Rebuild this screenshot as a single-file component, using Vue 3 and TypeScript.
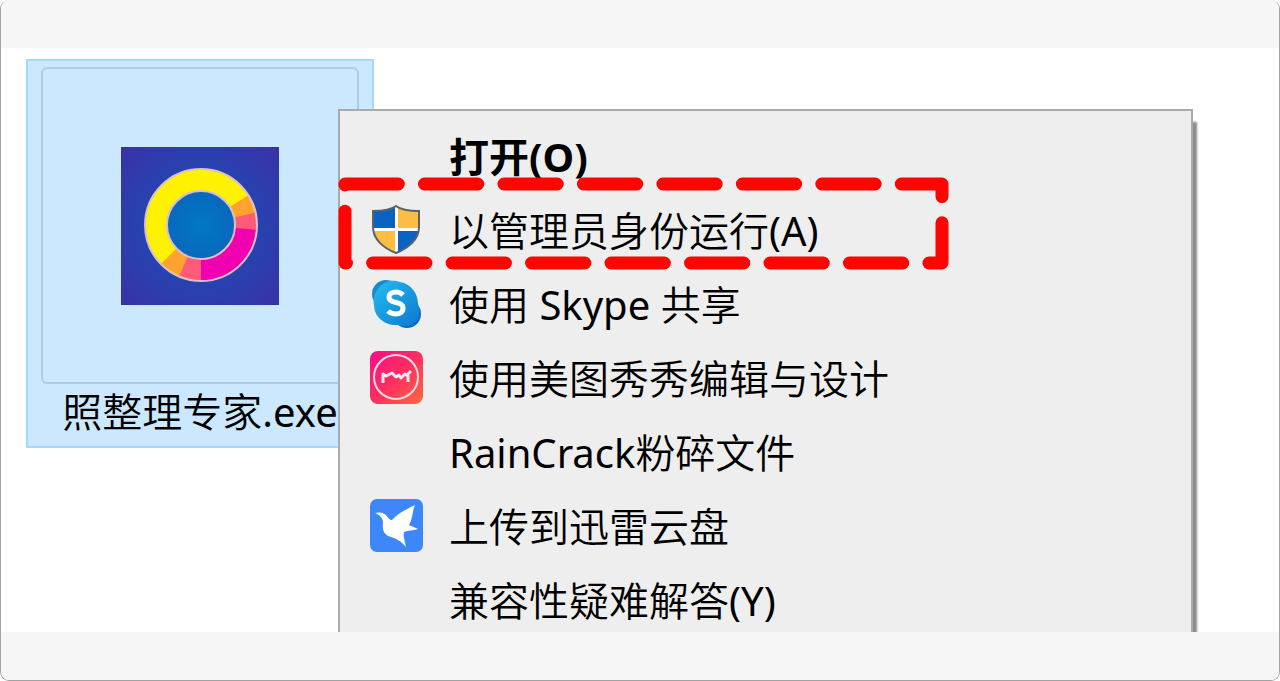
<script setup lang="ts">
type IconName = 'shield' | 'skype' | 'meitu' | 'bird'

interface MenuEntry {
  label: string
  icon?: IconName
  primary?: boolean
}

interface Run {
  text: string
  latin: boolean
}

const entries: MenuEntry[] = [
  { label: '打开(O)', primary: true },
  { label: '以管理员身份运行(A)', icon: 'shield' },
  { label: '使用 Skype 共享', icon: 'skype' },
  { label: '使用美图秀秀编辑与设计', icon: 'meitu' },
  { label: 'RainCrack粉碎文件' },
  { label: '上传到迅雷云盘', icon: 'bird' },
  { label: '兼容性疑难解答(Y)' },
]

const fileName = '照整理专家.exe'

// Latin runs are set a little heavier than the Chinese text around them.
function toRuns(text: string): Run[] {
  const parts = text.match(/[\x20-\x7e]+|[^\x20-\x7e]+/g) ?? []
  return parts.map((part) => ({ text: part, latin: /^[\x20-\x7e]/.test(part) }))
}

const ringSegments = [
  { color: '#ffa22e', from: -32, sweep: 20 },
  { color: '#ff5a78', from: -13, sweep: 19 },
  { color: '#f000b0', from: 5, sweep: 86 },
  { color: '#ff5a78', from: 90, sweep: 24 },
  { color: '#ffa22e', from: 113, sweep: 23 },
]
</script>

<template>
  <div class="page">
    <header class="band"></header>
    <main class="desktop">
      <button type="button" class="file">
        <span class="thumb">
          <svg class="app-icon" viewBox="0 0 158 158" aria-hidden="true">
            <defs>
              <radialGradient id="app-bg" cx="50%" cy="50%" r="70%">
                <stop offset="0" stop-color="#1c50b8" />
                <stop offset="0.6" stop-color="#2a40ae" />
                <stop offset="1" stop-color="#3a31a6" />
              </radialGradient>
              <radialGradient id="app-core">
                <stop offset="0" stop-color="#0078c4" />
                <stop offset="1" stop-color="#0a68bc" />
              </radialGradient>
            </defs>
            <rect width="158" height="158" fill="url(#app-bg)" />
            <circle cx="80" cy="78" r="34" fill="url(#app-core)" />
            <circle cx="80" cy="78" r="45" fill="none" stroke="#d9bcd6" stroke-width="24" />
            <circle cx="80" cy="78" r="45" fill="none" stroke="#fff200" stroke-width="20" />
            <circle
              v-for="s in ringSegments"
              :key="s.from"
              cx="80"
              cy="78"
              r="45"
              fill="none"
              :stroke="s.color"
              stroke-width="20"
              pathLength="360"
              :stroke-dasharray="`${s.sweep} ${360 - s.sweep}`"
              :transform="`rotate(${s.from} 80 78)`"
            />
          </svg>
        </span>
        <span class="file-name"><span v-for="(run, i) in toRuns(fileName)" :key="i" :class="{ latin: run.latin }">{{ run.text }}</span></span>
      </button>

      <div class="menu" role="menu">
        <button
          v-for="entry in entries"
          :key="entry.label"
          type="button"
          role="menuitem"
          class="item"
          :class="{ primary: entry.primary }"
        >
          <span class="icon">
            <svg v-if="entry.icon === 'shield'" viewBox="0 0 53 53" aria-hidden="true">
              <defs>
                <clipPath id="shield-clip">
                  <path d="M26 3C21 7 12 8 3 8V24C3 36 13 45 26 50C39 45 49 36 49 24V8C40 8 31 7 26 3Z" />
                </clipPath>
              </defs>
              <g clip-path="url(#shield-clip)">
                <rect width="53" height="53" fill="#fff" />
                <rect width="25" height="25" fill="#0a62c2" />
                <rect x="28" width="25" height="25" fill="#fdbd42" />
                <rect y="28" width="25" height="25" fill="#fdbd42" />
                <rect x="28" y="28" width="25" height="25" fill="#0a62c2" />
              </g>
              <path
                d="M26 3C21 7 12 8 3 8V24C3 36 13 45 26 50C39 45 49 36 49 24V8C40 8 31 7 26 3Z"
                fill="none"
                stroke="#58636c"
                stroke-width="2"
              />
            </svg>
            <svg v-else-if="entry.icon === 'skype'" viewBox="0 0 53 53" aria-hidden="true">
              <defs>
                <linearGradient id="skype-main" x1="0" y1="0" x2="1" y2="1">
                  <stop offset="0" stop-color="#24bdf0" />
                  <stop offset="1" stop-color="#0a78d0" />
                </linearGradient>
              </defs>
              <circle cx="16" cy="17" r="14" fill="#168ccb" />
              <circle cx="37" cy="37" r="14" fill="#0a6cc4" />
              <path
                d="M17 5C21 3 26 4 30 5C41 7 48 16 48 27C50 32 51 38 47 43C42 49 34 50 28 48C15 49 4 40 4 28C2 20 7 9 17 5Z"
                fill="url(#skype-main)"
              />
              <path
                d="M33 18C31 16 29 15 26 15C22 15 19 17 19 20C19 28 33 23 33 31C33 35 30 37 26 37C22 37 20 36 18 34"
                fill="none"
                stroke="#fff"
                stroke-width="5"
              />
            </svg>
            <svg v-else-if="entry.icon === 'meitu'" viewBox="0 0 53 53" aria-hidden="true">
              <defs>
                <linearGradient id="meitu-bg" x1="0" y1="0" x2="1" y2="1">
                  <stop offset="0" stop-color="#f80c88" />
                  <stop offset="0.5" stop-color="#ff2e60" />
                  <stop offset="1" stop-color="#ff6a3c" />
                </linearGradient>
              </defs>
              <rect width="53" height="53" rx="8" fill="url(#meitu-bg)" />
              <circle cx="26" cy="26" r="22" fill="none" stroke="#ffdbe3" stroke-width="2" />
              <path
                d="M13 32V23L16 25L22 22L26 26L29 24L31 27L35 23L38 25V31M37 24L41 20"
                fill="none"
                stroke="#ffeaf0"
                stroke-width="3"
                stroke-linejoin="round"
              />
            </svg>
            <svg v-else-if="entry.icon === 'bird'" viewBox="0 0 53 53" aria-hidden="true">
              <rect width="53" height="53" rx="7" fill="#3d87fb" />
              <path
                d="M5 14C9 13 13 13 16 16C18 19 20 21 22 21C27 15 35 11 45 6C42 13 43 19 39 26L48 30C43 32 38 31 34 33C33 38 35 43 36 48C31 42 27 40 21 38C14 36 12 31 13 24C13 19 10 16 5 14Z"
                fill="#fff"
              />
            </svg>
          </span>
          <span class="label"><span v-for="(run, i) in toRuns(entry.label)" :key="i" :class="{ latin: run.latin }">{{ run.text }}</span></span>
        </button>

        <svg class="highlight" viewBox="0 0 611 93" aria-hidden="true">
          <path
            d="M7 7H604V86H7Z"
            pathLength="1344"
            fill="none"
            stroke="#fd0500"
            stroke-width="13"
            stroke-linecap="round"
            stroke-linejoin="round"
            stroke-dasharray="53 26"
          />
        </svg>
      </div>
    </main>
    <footer class="band"></footer>
  </div>
</template>

<style>
body {
  margin: 0;
  background: #fff;
}
</style>

<style scoped>
.page {
  box-sizing: border-box;
  display: flex;
  flex-direction: column;
  height: 100vh;
  overflow: hidden;
  border: 1px solid #a2a2a2;
  border-top: 0;
  border-radius: 9px;
  background: #fff;
  color: #000;
  font-family: 'Noto Sans', 'Noto Sans CJK SC', sans-serif;
  font-size: 40px;
  font-weight: 350;
}

.band {
  flex: 0 0 48px;
  background: #f6f6f6;
}

.desktop {
  position: relative;
  flex: 1;
  min-height: 0;
  overflow: hidden;
  padding: 11px 25px;
}

button {
  margin: 0;
  font: inherit;
  color: inherit;
}

.file {
  box-sizing: border-box;
  display: flex;
  flex-direction: column;
  align-items: center;
  width: 348px;
  padding: 6px 0;
  border: 2px solid #a5d8fa;
  background: #cce8ff;
}

.thumb {
  box-sizing: border-box;
  display: grid;
  place-items: center;
  width: 318px;
  height: 317px;
  border: 2px solid #b0cbe3;
  border-radius: 6px;
}

.app-icon {
  display: block;
  width: 158px;
  height: 158px;
}

.file-name {
  line-height: 56px;
  white-space: nowrap;
}

.menu {
  position: absolute;
  top: 61px;
  left: 337px;
  right: 86px;
  padding: 7px 0;
  border: 2px solid #aaa;
  background: #eee;
  box-shadow: 4px 13px 2px #8c8c8c;
}

.item {
  display: flex;
  align-items: center;
  gap: 26px;
  width: 100%;
  height: 74px;
  padding: 0 30px;
  border: 0;
  background: none;
  text-align: left;
}

.label {
  white-space: pre;
}

.latin {
  font-weight: 400;
}

.primary,
.primary .latin {
  font-weight: 700;
}

.icon {
  flex: 0 0 53px;
  height: 53px;
}

.icon svg {
  display: block;
  width: 53px;
  height: 53px;
}

.highlight {
  position: absolute;
  top: 66px;
  left: -2px;
  width: 611px;
  height: 93px;
  pointer-events: none;
}
</style>
